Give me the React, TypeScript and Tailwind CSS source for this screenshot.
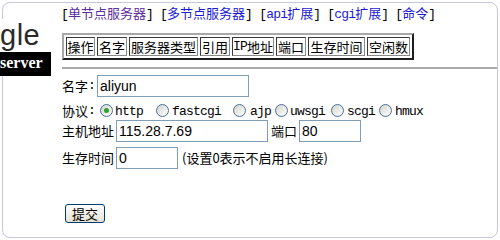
import React from "react";

const cjk = "font-['Noto_Sans_CJK_SC',sans-serif]";
const mono = "font-['Liberation_Mono',monospace] text-[13px] tracking-[-0.8px]";

function M({ children }: { children: React.ReactNode }) {
  return <span className={mono}>{children}</span>;
}

function Radio({ checked }: { checked?: boolean }) {
  return (
    <span className="inline-flex w-[13px] h-[13px] shrink-0 items-center justify-center rounded-full border border-[#4a6f98] bg-linear-to-br from-[#d4d4ce] to-white">
      {checked && <span className="w-[5px] h-[5px] rounded-full bg-[#2ca52c]" />}
    </span>
  );
}

const cells: [string, number][] = [
  ["操作", 29],
  ["名字", 30],
  ["服务器类型", 69],
  ["引用", 30],
  ["IP地址", 42],
  ["端口", 30],
  ["生存时间", 57],
  ["空闲数", 43],
];

function Link({ text, visited, latin }: { text: string; visited?: boolean; latin?: string }) {
  return (
    <span>
      <M>[</M>
      <span className={visited ? "text-[#5b2d9e]" : "text-[#1a1ad6]"}>
        {latin && <M>{latin}</M>}
        {text}
      </span>
      <M>]</M>
    </span>
  );
}

const inputCls =
  "ml-[2px] h-[22px] border border-[#7f9db9] px-[2px] text-[14px] font-['Liberation_Sans',sans-serif] text-black outline-none";

export default function App() {
  return (
    <div className={`w-[500px] h-[240px] bg-white p-[2px] overflow-hidden text-black ${cjk}`}>
      <div className="w-[496px] h-[236px] border border-[#c6c6da] rounded-[8px] flex">
        {/* logo column */}
        <div className="-ml-[3px] w-[61px] shrink-0 pt-[16px]">
          <div className="w-[51px] bg-white">
            <div className="h-[33px] leading-[32px] text-[29px] tracking-[0.5px] text-[#2a2a2a] font-['Liberation_Sans',sans-serif] whitespace-nowrap">
              gle
            </div>
            <div className="h-[24px] bg-black text-white font-['Liberation_Serif',serif] font-bold text-[16px] leading-[22px] whitespace-nowrap">
              server
            </div>
          </div>
        </div>

        {/* content column */}
        <div className="flex-1 flex flex-col">
          <div className="mt-[2px] h-[15px] leading-[15px] text-[13px] whitespace-pre">
            <Link text="单节点服务器" visited />
            <M> </M>
            <Link text="多节点服务器" />
            <M> </M>
            <Link latin="api" text="扩展" />
            <M> </M>
            <Link latin="cgi" text="扩展" />
            <M> </M>
            <Link text="命令" />
          </div>

          <div className="mt-[13px] ml-[1px] self-start flex gap-[2px] p-[2px] border-2 border-t-[#a8a8a8] border-l-[#a8a8a8] border-b-[#1e1e1e] border-r-[#1e1e1e]">
            {cells.map(([t, w]) => (
              <div
                key={t}
                style={{ width: w }}
                className="h-[19px] flex items-center justify-center border border-t-[#3a3a3a] border-l-[#3a3a3a] border-b-[#8a8a8a] border-r-[#8a8a8a] text-[13px] leading-[17px] whitespace-nowrap"
              >
                {t === "IP地址" ? (
                  <>
                    <M>IP</M>地址
                  </>
                ) : (
                  t
                )}
              </div>
            ))}
          </div>

          <div className="mt-[7px] ml-[1px] h-[2px] bg-[#a9a9a9]" />

          <div className="ml-[1px] mt-[6px] flex flex-col text-[13px]">
            <div className="h-[22px] flex items-center">
              <span>名字</span>
              <M>:</M>
              <input readOnly value="aliyun" className={`${inputCls} w-[152px]`} />
            </div>

            <div className="h-[23px] pt-[4px] flex items-center whitespace-pre">
              <span>协议</span>
              <M>:</M>
              <span className="ml-[5px] flex"><Radio checked /></span>
              <span className="ml-[2px]"><M>http</M></span>
              <span className="ml-[13px] flex"><Radio /></span>
              <span className="ml-[3px]"><M>fastcgi</M></span>
              <span className="ml-[12px] flex"><Radio /></span>
              <span className="ml-[4px]"><M>ajp</M></span>
              <span className="ml-[4px] flex"><Radio /></span>
              <span className="ml-[2px]"><M>uwsgi</M></span>
              <span className="ml-[6px] flex"><Radio /></span>
              <span className="ml-[3px]"><M>scgi</M></span>
              <span className="ml-[4px] flex"><Radio /></span>
              <span className="ml-[3px]"><M>hmux</M></span>
            </div>

            <div className="h-[22px] flex items-center">
              <span>主机地址</span>
              <input readOnly value="115.28.7.69" className={`${inputCls} w-[152px]`} />
              <span className="ml-[3px]">端口</span>
              <input readOnly value="80" className={`${inputCls} w-[62px]`} />
            </div>

            <div className="mt-[5px] h-[22px] flex items-center">
              <span>生存时间</span>
              <input readOnly value="0" className={`${inputCls} w-[62px]`} />
              <span className="ml-[4px]">(设置0表示不启用长连接)</span>
            </div>

            <div className="mt-[35px]">
              <button className="ml-[3px] w-[40px] h-[19px] rounded-[3px] border border-[#003c74] bg-linear-to-b from-white to-[#e4e1d3] text-[13px] leading-[15px] flex items-center justify-center">
                提交
              </button>
            </div>
          </div>
        </div>
      </div>
    </div>
  );
}
